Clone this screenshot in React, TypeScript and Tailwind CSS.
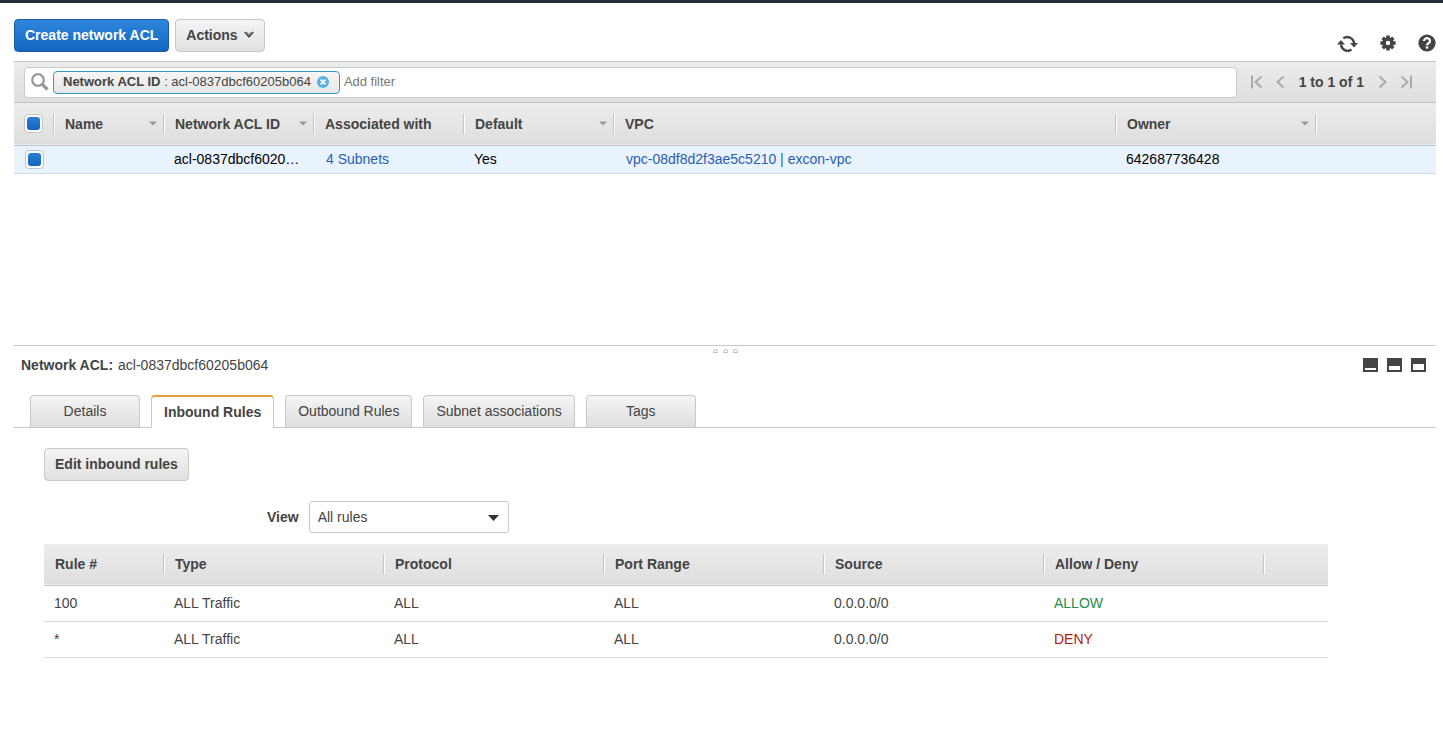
import { useState } from "react";
import type { ReactNode } from "react";
import clsx from "clsx";

interface Column {
  label: string;
  width: string;
  sortable?: boolean;
}

const ACL_COLUMNS: Column[] = [
  { label: "Name", width: "w-[110px]", sortable: true },
  { label: "Network ACL ID", width: "w-[150px]", sortable: true },
  { label: "Associated with", width: "w-[150px]" },
  { label: "Default", width: "w-[150px]", sortable: true },
  { label: "VPC", width: "" },
  { label: "Owner", width: "w-[200px]", sortable: true },
];

const RULE_COLUMNS: Column[] = [
  { label: "Rule #", width: "w-[120px]" },
  { label: "Type", width: "w-[220px]" },
  { label: "Protocol", width: "w-[220px]" },
  { label: "Port Range", width: "w-[220px]" },
  { label: "Source", width: "w-[220px]" },
  { label: "Allow / Deny", width: "w-[220px]" },
];

const RULES = [
  { rule: "100", type: "ALL Traffic", protocol: "ALL", ports: "ALL", source: "0.0.0.0/0", action: "ALLOW" },
  { rule: "*", type: "ALL Traffic", protocol: "ALL", ports: "ALL", source: "0.0.0.0/0", action: "DENY" },
];

const TABS = ["Details", "Inbound Rules", "Outbound Rules", "Subnet associations", "Tags"];

const GREY_BUTTON =
  "flex h-[33px] items-center rounded border border-[#c8c8c8] bg-linear-to-b from-[#f5f5f5] to-[#e0e0e0] px-2.5 pb-0.5 font-bold";

function HeaderCell({ column }: { column: Column }) {
  return (
    <th className={clsx("p-0 text-left", column.width)}>
      <div className="flex h-5 items-center justify-between border-r border-[#c4c4c4] pr-1.5 pl-[11px] shadow-[1px_0_0_#fff]">
        {column.label}
        {column.sortable && (
          <svg width="8" height="5" viewBox="0 0 8 5" fill="#999">
            <path d="M0 0.5h8L4 4.5z" />
          </svg>
        )}
      </div>
    </th>
  );
}

function Checkbox({ label }: { label: string }) {
  return (
    <input
      type="checkbox"
      defaultChecked
      aria-label={label}
      className="relative block size-[19px] appearance-none rounded border border-[#c6c6c6] bg-[#f8f8f8] before:absolute before:inset-0.5 before:rounded-[3px] before:bg-linear-to-b before:from-[#2a80d6] before:to-[#1464bd] not-checked:before:hidden"
    />
  );
}

function PagerButton({ label, children }: { label: string; children: ReactNode }) {
  return (
    <button type="button" aria-label={label}>
      <svg width="12" height="14" viewBox="0 0 12 14" fill="none" stroke="#aaa" strokeWidth="2">
        {children}
      </svg>
    </button>
  );
}

function PaneIcon({ label, y, height }: { label: string; y: number; height: number }) {
  return (
    <button type="button" aria-label={label}>
      <svg width="15" height="14" viewBox="0 0 15 14">
        <rect width="15" height="14" fill="#444" />
        <rect x="2" y={y} width="11" height={height} fill="#fff" />
      </svg>
    </button>
  );
}

function Toolbar() {
  return (
    <div className="flex items-end justify-between pt-4 pb-[9px]">
      <div className="flex gap-1.5">
        <button
          type="button"
          className="h-[33px] rounded border border-[#1a5ba3] bg-linear-to-b from-[#2e86dc] to-[#1166bf] px-2.5 pb-0.5 font-bold text-white"
        >
          Create network ACL
        </button>
        <button type="button" className={clsx(GREY_BUTTON, "gap-1.5")}>
          Actions
          <svg width="10" height="8" viewBox="0 0 10 8" fill="none" stroke="#444" strokeWidth="1.8">
            <path d="M0.8 1l4.2 4.6L9.2 1" />
            <path d="M3 1l2 2.2L7 1" strokeWidth="1" stroke="#888" />
          </svg>
        </button>
      </div>
      <div className="flex items-center gap-[22px]">
        <button type="button" aria-label="Refresh">
          <svg width="21" height="17" viewBox="0 0 21 17" fill="none" stroke="#444" strokeWidth="2.4">
            <path d="M6.300 3.400A6.700 6.700 0 0 1 17 8.500" />
            <path d="M14.500 14.600A6.700 6.700 0 0 1 4 9.500" />
            <path d="M13 8h8l-4 4.500zM0 9.500h8L4 5z" fill="#444" stroke="none" />
          </svg>
        </button>
        <button type="button" aria-label="Settings">
          <svg width="16" height="16" viewBox="-8 -8 16 16" fill="none" stroke="#444" strokeWidth="3.600">
            <path d="M0-7.600V-4M0 7.600V4M-7.600 0H-4M7.600 0H4M-5.300-5.300L-3-3M5.300 5.300L3 3M-5.300 5.300L-3 3M5.300-5.300L3-3" />
            <circle r="4" />
          </svg>
        </button>
        <button type="button" aria-label="Help">
          <svg width="18" height="18" viewBox="0 0 18 18">
            <circle cx="9" cy="9" r="8.600" fill="#444" />
            <path d="M6 7a3 2.700 0 1 1 4.600 2.200C9.500 9.900 9 10.200 9 11.300" fill="none" stroke="#fff" strokeWidth="2.200" />
            <rect x="7.800" y="12.300" width="2.400" height="2.300" fill="#fff" />
          </svg>
        </button>
      </div>
    </div>
  );
}

function FilterBar() {
  return (
    <div className="flex h-[42px] items-center border-y border-[#c4c4c4] bg-linear-to-b from-[#ececec] to-[#dedede] pr-6 pl-2.5">
      <div className="flex h-[31px] flex-1 items-center rounded border border-[#ccc] bg-white pl-1.5 text-[13px]">
        <svg width="18" height="18" viewBox="0 0 18 18" fill="none" stroke="#999">
          <circle cx="7" cy="7" r="5.800" strokeWidth="2.200" />
          <path d="M11.300 11.300l5.200 5.200" strokeWidth="3.200" />
        </svg>
        <div className="ml-1 flex h-[23px] items-center rounded border border-[#2f9cc6] bg-linear-to-b from-[#f6f6f6] to-[#e6e6e6] pr-2.5 pl-[9px]">
          <span>
            <b>Network ACL ID</b> : acl-0837dbcf60205b064
          </span>
          <button type="button" aria-label="Remove filter" className="ml-1.5">
            <svg width="12" height="12" viewBox="0 0 12 12">
              <circle cx="6" cy="6" r="6" fill="#58b1e2" />
              <path d="M3.600 3.600l4.800 4.800M8.400 3.600L3.600 8.400" stroke="#fff" strokeWidth="1.800" />
            </svg>
          </button>
        </div>
        <input
          type="text"
          aria-label="Add filter"
          placeholder="Add filter"
          className="ml-1 min-w-0 flex-1 outline-none placeholder:text-[#777]"
        />
      </div>
      <div className="ml-3.5 flex items-center gap-3">
        <PagerButton label="First page">
          <path d="M1 0.500v13M10.500 1.500L4.500 7l6 5.500" />
        </PagerButton>
        <PagerButton label="Previous page">
          <path d="M8.500 1.500L2.500 7l6 5.500" />
        </PagerButton>
        <span className="font-bold">1 to 1 of 1</span>
        <PagerButton label="Next page">
          <path d="M3.500 1.500l6 5.500-6 5.500" />
        </PagerButton>
        <PagerButton label="Last page">
          <path d="M11 0.500v13M1.500 1.500l6 5.500-6 5.500" />
        </PagerButton>
      </div>
    </div>
  );
}

function AclTable() {
  return (
    <table className="w-full table-fixed border-collapse">
      <thead>
        <tr className="h-[42px] border-b border-[#c0c4cc] bg-linear-to-b from-[#ededed] to-[#dedede]">
          <th className="w-10 p-0">
            <div className="flex h-5 items-center border-r border-[#c4c4c4] pl-2.5 shadow-[1px_0_0_#fff]">
              <Checkbox label="Select all" />
            </div>
          </th>
          {ACL_COLUMNS.map((c) => (
            <HeaderCell key={c.label} column={c} />
          ))}
          <td className="w-[120px]" />
        </tr>
      </thead>
      <tbody>
        <tr className="h-7 border-b border-[#d5dae0] bg-[#e9f3fe] text-black">
          <td className="p-0 pl-[11px]">
            <Checkbox label="Select acl-0837dbcf60205b064" />
          </td>
          <td />
          <td className="truncate p-0 px-2.5">acl-0837dbcf60205b064</td>
          <td className="p-0 px-3">
            <a href="#subnets" className="text-[#2a5db0]">4 Subnets</a>
          </td>
          <td className="p-0 px-2.5">Yes</td>
          <td className="p-0 px-3">
            <a href="#vpc" className="text-[#2a5db0]">vpc-08df8d2f3ae5c5210 | excon-vpc</a>
          </td>
          <td className="p-0 px-2.5">642687736428</td>
          <td />
        </tr>
      </tbody>
    </table>
  );
}

function RulesTable() {
  return (
    <table className="mt-[11px] w-full table-fixed border-collapse">
      <thead>
        <tr className="h-[41px] border-b border-[#c8c8c8] bg-linear-to-b from-[#ededed] to-[#dedede]">
          {RULE_COLUMNS.map((c) => (
            <HeaderCell key={c.label} column={c} />
          ))}
          <td />
        </tr>
      </thead>
      <tbody>
        {RULES.map((r) => (
          <tr key={r.rule} className="h-9 border-b border-[#d9d9d9]">
            <td className="p-0 px-2.5">{r.rule}</td>
            <td className="p-0 px-2.5">{r.type}</td>
            <td className="p-0 px-2.5">{r.protocol}</td>
            <td className="p-0 px-2.5">{r.ports}</td>
            <td className="p-0 px-2.5">{r.source}</td>
            <td className={clsx("p-0 px-2.5", r.action === "ALLOW" ? "text-[#1e8e4a]" : "text-[#b11a12]")}>
              {r.action}
            </td>
            <td />
          </tr>
        ))}
      </tbody>
    </table>
  );
}

export default function App() {
  const [tab, setTab] = useState("Inbound Rules");

  return (
    <div className="min-h-screen border-t-[3px] border-[#262d3b] bg-white pr-[7px] pl-3.5 font-['Liberation_Sans',Arial,sans-serif] text-sm leading-5 text-[#444]">
      <Toolbar />
      <FilterBar />
      <div className="min-h-[242px]">
        <AclTable />
      </div>

      {/* splitter */}
      <div className="flex h-2 items-end justify-center gap-[5px] border-t border-[#c8c8c8]">
        <span className="h-1 w-[5px] rounded-t-sm border border-[#bbb]" />
        <span className="h-1 w-[5px] rounded-t-sm border border-[#bbb]" />
        <span className="h-1 w-[5px] rounded-t-sm border border-[#bbb]" />
      </div>

      <div className="mt-0.5 flex items-center justify-between pr-2.5 pl-[7px]">
        <p>
          <b>Network ACL:</b>
          <span className="ml-[5px]">acl-0837dbcf60205b064</span>
        </p>
        <div className="flex gap-[9px]">
          <PaneIcon label="Minimise details" y={10} height={2} />
          <PaneIcon label="Split details" y={8} height={4} />
          <PaneIcon label="Maximise details" y={6} height={6} />
        </div>
      </div>

      <div role="tablist" className="mt-5 flex h-[33px] gap-[11px] border-b border-[#c8c8c8] pl-4">
        {TABS.map((name) => (
          <button
            key={name}
            type="button"
            role="tab"
            aria-selected={tab === name}
            onClick={() => setTab(name)}
            className={clsx(
              "min-w-[110px] rounded-t border-x px-3 pb-0.5",
              tab === name
                ? "-mb-px border-t-2 border-x-[#c8c8c8] border-t-[#e0a03a] bg-white font-bold"
                : "border-t border-[#c8c8c8] bg-linear-to-b from-[#f5f5f5] to-[#dedede]"
            )}
          >
            {name}
          </button>
        ))}
      </div>

      <div className="pt-5 pr-[108px] pl-[30px]">
        <button type="button" className={GREY_BUTTON}>
          Edit inbound rules
        </button>
        <div className="mt-5 flex items-center gap-2.5 pl-[223px]">
          <label htmlFor="view" className="font-bold">View</label>
          <div className="relative">
            <select
              id="view"
              className="h-8 w-[200px] appearance-none rounded-[3px] border border-[#c8c8c8] bg-white px-2"
            >
              <option>All rules</option>
              <option>Allow rules</option>
              <option>Deny rules</option>
            </select>
            <svg
              className="pointer-events-none absolute top-3.5 right-2.5"
              width="11"
              height="6"
              viewBox="0 0 11 6"
              fill="#333"
            >
              <path d="M0 0h11L5.500 6z" />
            </svg>
          </div>
        </div>
        <RulesTable />
      </div>
    </div>
  );
}
